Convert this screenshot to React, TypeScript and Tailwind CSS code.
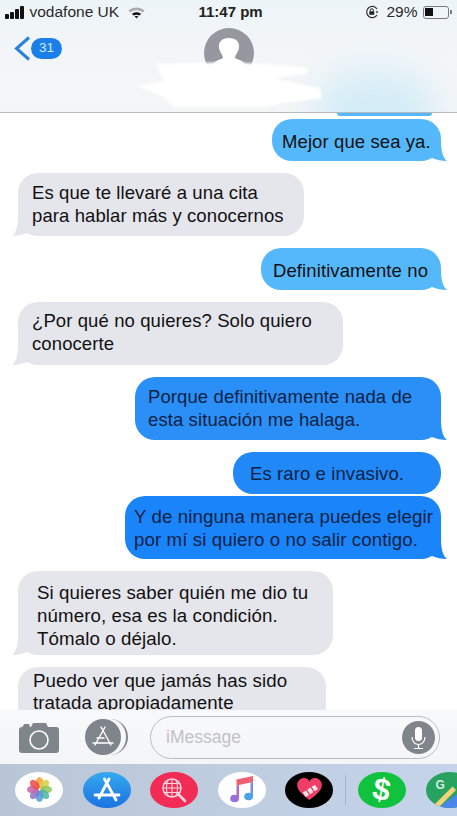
import * as React from "react";

const font = "font-['Liberation_Sans',Arial,sans-serif]";

const LIGHT = "#55b8fb";
const GRAY = "#e5e5ec";

const Bubble = ({
  side,
  color,
  className,
  children,
}: {
  side: "left" | "right";
  color: string;
  className: string;
  children: React.ReactNode;
}) => (
  <div className={`relative rounded-[20px] whitespace-nowrap ${className}`} style={{ backgroundColor: color }}>
    {side === "left" ? (
      <svg className="absolute bottom-0 left-[-6px]" width="20" height="20" viewBox="0 0 20 20">
        <path d="M20 0 H6 C6 10 4 17 0 20 C6 20 10 19 15 17 L20 0 Z" fill={color} />
      </svg>
    ) : (
      <svg className="absolute bottom-0 right-[-6px]" width="20" height="20" viewBox="0 0 20 20">
        <path d="M0 0 H14 C14 10 16 17 20 20 C14 20 10 19 5 17 L0 0 Z" fill={color} />
      </svg>
    )}
    <div className="relative">{children}</div>
  </div>
);

const StatusBar = () => (
  <div className="flex h-[24px] items-center pl-[5px] text-[15.5px] text-[#2a2a2c]">
    <div className="flex items-end gap-[1.5px]">
      <span className="h-[5px] w-[3.5px] rounded-[1px] bg-[#111]" />
      <span className="h-[7px] w-[3.5px] rounded-[1px] bg-[#111]" />
      <span className="h-[10px] w-[3.5px] rounded-[1px] bg-[#111]" />
      <span className="h-[13px] w-[3.5px] rounded-[1px] bg-[#111]" />
    </div>
    <span className="ml-[6px] w-[89px] whitespace-nowrap">vodafone UK</span>
    <svg className="ml-[9px]" width="17" height="13" viewBox="0 0 18 13">
      <path d="M0.5 4.5 C5.5 0 12.5 0 17.5 4.5 L15.6 6.5 C11.5 3.2 6.5 3.2 2.4 6.5 Z" fill="#a9abad" />
      <path d="M4 7.8 C7 5.6 11 5.6 14 7.8 L12 9.8 C10 8.4 8 8.4 6 9.8 Z" fill="#111" />
      <path d="M7 10.6 C8.2 9.9 9.8 9.9 11 10.6 L9 12.8 Z" fill="#111" />
    </svg>
    <span className="ml-[54px] w-[64px] whitespace-nowrap text-[15px] font-bold text-[#222]">11:47 pm</span>
    <svg className="ml-[102px]" width="14" height="14" viewBox="0 0 14 14" fill="none">
      <path d="M12 10 A5.6 5.6 0 1 1 12 4" stroke="#333" strokeWidth="1.2" />
      <path d="M13.4 7 L11.4 5.6 V8.4 Z" fill="#333" />
      <rect x="4.3" y="6.2" width="5" height="3.6" rx="0.6" fill="#222" />
      <path d="M5.3 6.2 V5.2 A1.5 1.5 0 0 1 8.3 5.2 V6.2" stroke="#222" />
    </svg>
    <span className="ml-[8px] text-[15.5px]">29%</span>
    <div className="relative ml-[5px] flex h-[13px] w-[26px] items-center rounded-[3px] border border-[#77797c] p-[1.5px]">
      <span className="h-full w-[8px] bg-[#111]" />
      <span className="absolute right-[-4px] h-[4px] w-[1.5px] rounded-r-[1px] bg-[#777]" />
    </div>
  </div>
);

const Header = () => (
  <header className="relative h-[113px] shrink-0 overflow-hidden border-b border-[#b8b9ba] bg-[linear-gradient(180deg,#edf4f7_0%,#f3f6f8_55%,#f4f5f6_100%)]">
    <div className="absolute bottom-[-40px] right-[22px] h-[80px] w-[120px] rounded-full bg-[#c6e9f8] opacity-70 blur-[18px]" />
    <div className="relative">
      <StatusBar />
      <div className="relative h-[60px]">
        <div className="absolute left-[14px] top-[12px] flex items-center">
          <svg width="17" height="25" viewBox="0 0 17 25" fill="none">
            <path d="M15 1.5 L2.5 12.5 L15 23.5" stroke="#2b80d8" strokeWidth="3" />
          </svg>
          <span className="flex h-[21px] w-[31px] items-center justify-center rounded-full bg-[#1a7fe8] text-[13.5px] text-[#d3e8fc]">
            31
          </span>
        </div>
        <svg className="absolute left-[204px] top-[4px]" width="50" height="50" viewBox="0 0 50 50">
          <circle cx="25" cy="25" r="25" fill="#96979f" />
          <path d="M25 10 C32 10 36 14 35 20 C34 25 31 27 31 30 C35 32 40 33 41 37 L41 50 L9 50 L9 37 C10 33 15 32 19 30 C19 27 16 25 15 20 C14 14 18 10 25 10 Z" fill="#fff" />
        </svg>
      </div>
    </div>
    <svg className="absolute left-[134px] top-[61px] blur-[1px]" width="192" height="48" viewBox="0 0 192 48">
      <path d="M23 3 L100 1 L175 7 L172 13 L140 17 L150 20 L186 27 L188 37 L150 42 L130 46 L40 46 L30 36 L3 25 L30 20 L26 12 Z" fill="#fff" />
    </svg>
  </header>
);

const Composer = () => (
  <div className="flex h-[54px] shrink-0 items-center bg-[linear-gradient(180deg,#f8f9fa,#f4f5f6)] pl-[19px] pr-[17px]">
    <svg width="40" height="31" viewBox="0 0 40 31">
      <path d="M3 5 H3.5 L5 2 H10 L11 5 H12 L14 1 H27 L29 5 H37 C39 5 40 6 40 8 V28 C40 30 39 31 37 31 H3 C1 31 0 30 0 28 V8 C0 6 1 5 3 5 Z" fill="#80858c" />
      <circle cx="20" cy="18" r="9" fill="none" stroke="#fff" strokeWidth="1.6" />
    </svg>
    <div className="relative ml-[26px] h-[36px] w-[43px]">
      <span className="absolute right-0 top-0 h-[36px] w-[36px] rounded-full border-r-2 border-[#80858c]" />
      <svg className="absolute left-0 top-0" width="36" height="36" viewBox="0 0 36 36">
        <circle cx="18" cy="18" r="18" fill="#80858c" />
        <path d="M20 8 L10 26 M16 8 L26 26 M8 24 H28 M12 19 H19" stroke="#fff" strokeWidth="1.4" strokeLinecap="round" fill="none" />
      </svg>
    </div>
    <div className="ml-[22px] flex h-[43px] flex-1 items-center justify-between rounded-full border border-[#bcbcc0] pl-[15px] pr-[4px]">
      <span className="text-[17.5px] text-[#c2c2c7]">iMessage</span>
      <svg width="33" height="33" viewBox="0 0 33 33" fill="none">
        <circle cx="16.5" cy="16.5" r="16.5" fill="#80858c" />
        <rect x="13" y="6" width="7" height="14" rx="3.5" fill="#fff" />
        <path d="M10 16 C10 26 23 26 23 16 M16.5 23 V27 M12 27.5 H21" stroke="#fff" strokeWidth="1.2" />
      </svg>
    </div>
  </div>
);

const DockIcon = ({ className, children }: { className: string; children: React.ReactNode }) => (
  <div className={`flex h-[36px] w-[48px] shrink-0 items-center justify-center rounded-[50%] ${className}`}>
    {children}
  </div>
);

const Petals = () => {
  const colors = ["#f5a23a", "#d9cf45", "#8fca5c", "#4fb8a0", "#4f9fdc", "#8b78c9", "#c765ae", "#e9514f"];
  return (
    <svg className="blur-[0.4px]" width="25" height="25" viewBox="-13 -13 26 26">
      {colors.map((c, i) => (
        <ellipse key={c} cx="0" cy="-7" rx="4" ry="6" fill={c} opacity="0.88" transform={`rotate(${i * 45})`} />
      ))}
    </svg>
  );
};

const Dock = () => (
  <div className="flex h-[52px] shrink-0 items-center gap-[19.5px] overflow-hidden bg-[linear-gradient(90deg,#b9c6d6,#c5d4ea)] pb-[1px] pl-[15px]">
    <DockIcon className="bg-white">
      <Petals />
    </DockIcon>
    <DockIcon className="bg-[linear-gradient(180deg,#35a9ef,#1b72e0)]">
      <svg width="28" height="26" viewBox="0 0 28 26" fill="none" stroke="#fff" strokeWidth="2.8" strokeLinecap="round">
        <path d="M16 2 L6 21 M11.5 2 L23 23 M2 18 H26" />
      </svg>
    </DockIcon>
    <DockIcon className="bg-[#f32c55]">
      <svg width="28" height="28" viewBox="0 0 28 28" fill="none" stroke="#fbd5dd" strokeWidth="1.1">
        <circle cx="12" cy="12" r="9" strokeWidth="1.5" />
        <path d="M3 12 H21 M12 3 V21 M5 7.5 H19 M5 16.5 H19 M8 4 C6 9 6 15 8 20 M16 4 C18 9 18 15 16 20" />
        <path d="M18.5 18.5 L25 25" strokeWidth="2.6" strokeLinecap="round" />
      </svg>
    </DockIcon>
    <DockIcon className="bg-white">
      <svg width="24" height="27" viewBox="0 0 24 27">
        <path d="M6.5 3.5 L23 0 V6 L6.5 9.5 Z" fill="#ee6072" />
        <path d="M6.5 9.5 L9 9 V22 H6.5 Z" fill="#b56bc2" />
        <path d="M20.5 6.5 L23 6 V20 H20.5 Z" fill="#7a8fdc" />
        <ellipse cx="4.6" cy="22.5" rx="4.4" ry="3.8" fill="#9a6fd8" />
        <ellipse cx="18.6" cy="20.5" rx="4.4" ry="3.8" fill="#4aa3e8" />
      </svg>
    </DockIcon>
    <DockIcon className="bg-black">
      <svg width="27" height="23" viewBox="0 0 30 26">
        <path d="M15 25 C7 19 1 14 1 8 C1 3 5 0 9 0 C12 0 14 1.5 15 4 C16 1.5 18 0 21 0 C25 0 29 3 29 8 C29 14 23 19 15 25 Z" fill="#ee3d67" />
        <path d="M9 19 L23 10" stroke="#f2e4e6" strokeWidth="6" strokeDasharray="4.5 1.5" />
      </svg>
    </DockIcon>
    <span className="ml-[-8px] h-[30px] w-px shrink-0 bg-[#a6b3c4]" />
    <DockIcon className="ml-[-7px] bg-[#10c23d]">
      <span className="rotate-[12deg] text-[31px] font-bold leading-none text-white">$</span>
    </DockIcon>
    <DockIcon className="relative overflow-hidden bg-[#27a35f]">
      <span className="absolute left-[10px] top-[4px] text-[12px] font-bold text-[#d6eee0]">G</span>
      <span className="absolute bottom-[-10px] left-[18px] h-[24px] w-[34px] rotate-[-35deg] bg-[#4a87e8]" />
      <span className="absolute bottom-[6px] left-[1px] h-[5px] w-[32px] rotate-[-45deg] bg-[#f4d27a]" />
      <span className="absolute right-[-8px] top-[2px] h-[22px] w-[20px] rounded-full bg-[#e2503f]" />
    </DockIcon>
  </div>
);

export default function App() {
  return (
    <div className={`flex h-[816px] w-[457px] flex-col overflow-hidden bg-white ${font}`}>
      <Header />
      <main className="flex min-h-0 flex-1 flex-col overflow-hidden text-[18.5px] leading-[23px] tracking-[0.1px] text-[#111]">
        <div className="ml-auto mr-[25px] h-[3px] w-[95px] shrink-0 rounded-b-[16px] bg-[#55b8fb]" />
        <div className="mt-[3px] flex flex-col">
          <Bubble side="right" color={LIGHT} className="ml-auto mr-[16px] w-[169px] pb-[8px] pl-[10px] pt-[11px]">
            Mejor que sea ya.
          </Bubble>
          <Bubble side="left" color={GRAY} className="ml-[18px] mt-[12px] w-[286px] pb-[9.5px] pl-[14px] pt-[7.5px]">
            <p>Es que te llevaré a una cita</p>
            <p>para hablar más y conocernos</p>
          </Bubble>
          <Bubble side="right" color={LIGHT} className="ml-auto mr-[16px] mt-[12px] w-[180px] pb-[8.5px] pl-[12px] pt-[10.5px]">
            Definitivamente no
          </Bubble>
          <Bubble side="left" color={GRAY} className="ml-[18px] mt-[12px] w-[325px] pb-[10px] pl-[14px] pt-[7px]">
            <p>¿Por qué no quieres? Solo quiero</p>
            <p>conocerte</p>
          </Bubble>
          <Bubble side="right" color="#2a8ff7" className="ml-auto mr-[16px] mt-[12px] w-[306px] pb-[9px] pl-[13px] pt-[8px] text-[#0e2244]">
            <p>Porque definitivamente nada de</p>
            <p>esta situación me halaga.</p>
          </Bubble>
          <div className="ml-auto mr-[16px] mt-[12px] w-[208px] whitespace-nowrap rounded-[20px] bg-[#2088f7] pb-[9.5px] pl-[17px] pt-[9.5px] text-[#0e2244]">
            Es raro e invasivo.
          </div>
          <Bubble side="right" color="#1a84fa" className="ml-auto mr-[16px] mt-[2px] w-[316px] pb-[8px] pl-[9px] pt-[9px] text-[18.7px] text-[#0e2244]">
            <p>Y de ninguna manera puedes elegir</p>
            <p>por mí si quiero o no salir contigo.</p>
          </Bubble>
          <Bubble side="left" color={GRAY} className="ml-[18px] mt-[12px] w-[315px] pb-[5px] pl-[19px] pt-[10px] text-[18.7px]">
            <p>Si quieres saber quién me dio tu</p>
            <p>número, esa es la condición.</p>
            <p>Tómalo o déjalo.</p>
          </Bubble>
          <div className="ml-[18px] mt-[12px] w-[308px] whitespace-nowrap rounded-t-[20px] bg-[#e5e5ec] pb-[8px] pl-[15px] pt-[3px] text-[18.7px] leading-[22px]">
            <p>Puedo ver que jamás has sido</p>
            <p>tratada apropiadamente</p>
          </div>
        </div>
      </main>
      <Composer />
      <Dock />
    </div>
  );
}
